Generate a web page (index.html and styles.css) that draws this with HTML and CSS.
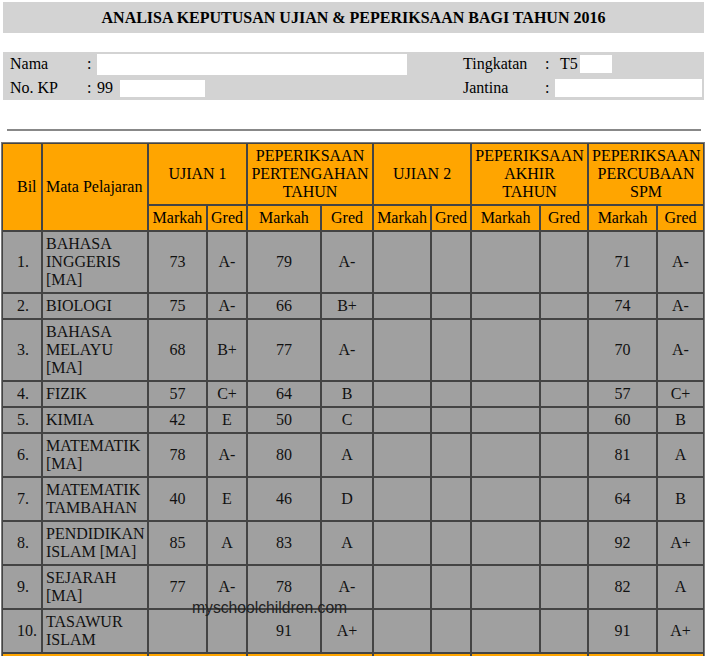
FILE: index.html
```html
<!DOCTYPE html>
<html lang="ms">
<head>
<meta charset="utf-8">
<title>Analisa Keputusan</title>
<link rel="stylesheet" href="styles.css">
</head>
<body>
<div class="page">
  <h1 class="title">ANALISA KEPUTUSAN UJIAN &amp; PEPERIKSAAN BAGI TAHUN 2016</h1>

  <div class="info">
    <span class="lbl">Nama</span><span class="colon">:</span>
    <span class="val"><span class="box box-nama"></span></span>
    <span class="lbl">Tingkatan</span><span class="colon">:</span>
    <span class="val val-t5">T5<span class="box box-t5"></span></span>
    <span class="lbl">No. KP</span><span class="colon">:</span>
    <span class="val">99<span class="box box-kp"></span></span>
    <span class="lbl">Jantina</span><span class="colon">:</span>
    <span class="val"><span class="box box-jantina"></span></span>
  </div>

  <hr class="rule">

  <table class="results">
    <colgroup>
      <col class="c-bil"><col class="c-subj">
      <col class="c-59"><col class="c-40">
      <col class="c-74"><col class="c-52">
      <col class="c-58"><col class="c-40">
      <col class="c-69"><col class="c-48">
      <col class="c-69"><col class="c-47">
    </colgroup>
    <thead>
      <tr class="head-top">
        <th rowspan="2" class="bil">Bil</th>
        <th rowspan="2" class="subj">Mata Pelajaran</th>
        <th colspan="2">UJIAN 1</th>
        <th colspan="2">PEPERIKSAAN<br>PERTENGAHAN<br>TAHUN</th>
        <th colspan="2">UJIAN 2</th>
        <th colspan="2">PEPERIKSAAN<br>AKHIR<br>TAHUN</th>
        <th colspan="2">PEPERIKSAAN<br>PERCUBAAN<br>SPM</th>
      </tr>
      <tr class="head-sub">
        <th>Markah</th><th>Gred</th>
        <th>Markah</th><th>Gred</th>
        <th>Markah</th><th>Gred</th>
        <th>Markah</th><th>Gred</th>
        <th>Markah</th><th>Gred</th>
      </tr>
    </thead>
    <tbody>
      <tr><td class="bil">1.</td><td class="subj">BAHASA<br>INGGERIS<br>[MA]</td><td>73</td><td>A-</td><td>79</td><td>A-</td><td></td><td></td><td></td><td></td><td>71</td><td>A-</td></tr>
      <tr><td class="bil">2.</td><td class="subj">BIOLOGI</td><td>75</td><td>A-</td><td>66</td><td>B+</td><td></td><td></td><td></td><td></td><td>74</td><td>A-</td></tr>
      <tr><td class="bil">3.</td><td class="subj">BAHASA<br>MELAYU<br>[MA]</td><td>68</td><td>B+</td><td>77</td><td>A-</td><td></td><td></td><td></td><td></td><td>70</td><td>A-</td></tr>
      <tr><td class="bil">4.</td><td class="subj">FIZIK</td><td>57</td><td>C+</td><td>64</td><td>B</td><td></td><td></td><td></td><td></td><td>57</td><td>C+</td></tr>
      <tr><td class="bil">5.</td><td class="subj">KIMIA</td><td>42</td><td>E</td><td>50</td><td>C</td><td></td><td></td><td></td><td></td><td>60</td><td>B</td></tr>
      <tr><td class="bil">6.</td><td class="subj">MATEMATIK<br>[MA]</td><td>78</td><td>A-</td><td>80</td><td>A</td><td></td><td></td><td></td><td></td><td>81</td><td>A</td></tr>
      <tr><td class="bil">7.</td><td class="subj">MATEMATIK<br>TAMBAHAN</td><td>40</td><td>E</td><td>46</td><td>D</td><td></td><td></td><td></td><td></td><td>64</td><td>B</td></tr>
      <tr><td class="bil">8.</td><td class="subj">PENDIDIKAN<br>ISLAM [MA]</td><td>85</td><td>A</td><td>83</td><td>A</td><td></td><td></td><td></td><td></td><td>92</td><td>A+</td></tr>
      <tr><td class="bil">9.</td><td class="subj">SEJARAH<br>[MA]</td><td>77</td><td>A-</td><td>78</td><td>A-</td><td></td><td></td><td></td><td></td><td>82</td><td>A</td></tr>
      <tr><td class="bil">10.</td><td class="subj">TASAWUR<br>ISLAM</td><td></td><td></td><td>91</td><td>A+</td><td></td><td></td><td></td><td></td><td>91</td><td>A+</td></tr>
      <tr class="total"><td colspan="2">&nbsp;</td><td colspan="2">&nbsp;</td><td colspan="2">&nbsp;</td><td colspan="2">&nbsp;</td><td colspan="2">&nbsp;</td><td colspan="2">&nbsp;</td></tr>
    </tbody>
  </table>

  <div class="watermark">myschoolchildren.com</div>
</div>
</body>
</html>
```

FILE: styles.css
```css
body {
  margin: 0;
  background: #fff;
  color: #000;
  font-family: "Liberation Serif", "Times New Roman", serif;
  font-size: 16px;
}

.page {
  position: relative;
}

.title {
  margin: 2px 5px 0 3px;
  height: 31px;
  line-height: 31px;
  background: #d3d3d3;
  text-align: center;
  font-size: 16px;
  font-weight: bold;
}

.info {
  margin: 19px 5px 0 3px;
  padding-left: 7px;
  height: 48px;
  background: #d3d3d3;
  display: grid;
  grid-template-columns: 77px 10px 366px 82px 10px 1fr;
  grid-template-rows: 24px 24px;
  align-items: center;
  line-height: 18px;
}

.val {
  display: flex;
  align-items: center;
}

.val-t5 {
  padding-left: 5px;
}

.box {
  display: inline-block;
  background: #fff;
}

.box-nama { width: 310px; height: 21px; }
.box-t5 { width: 32px; height: 18px; margin-left: 2px; }
.box-kp { width: 85px; height: 17px; margin-left: 7px; }
.box-jantina { width: 147px; height: 18px; }

.rule {
  margin: 29px 8px 0 7px;
  border: 0;
  height: 2px;
  background: #888;
}

.results {
  margin: 11px 0 0 1px;
  width: 704px;
  table-layout: fixed;
  border-collapse: separate;
  border-spacing: 0;
  border: 1px solid #7a7a7a;
}

.c-bil { width: 40px; }
.c-subj { width: 106px; }
.c-59 { width: 59px; }
.c-40 { width: 40px; }
.c-74 { width: 74px; }
.c-52 { width: 52px; }
.c-58 { width: 58px; }
.c-69 { width: 69px; }
.c-48 { width: 48px; }
.c-47 { width: 47px; }

.results th,
.results td {
  border: 1px solid #444;
  padding: 3px;
  line-height: 18px;
  font-weight: normal;
  text-align: center;
  vertical-align: middle;
  white-space: nowrap;
}

.results th {
  background: #ffa500;
}

.results td {
  background: #a0a0a0;
  color: #111;
}

.results .bil {
  text-align: left;
  padding-left: 14px;
}

.results .subj {
  text-align: left;
}

.results .total td {
  background: #ffa500;
}

.watermark {
  position: absolute;
  left: 192px;
  top: 597px;
  font-family: "Liberation Sans", Arial, sans-serif;
  font-size: 15.7px;
  color: #222;
}
```
